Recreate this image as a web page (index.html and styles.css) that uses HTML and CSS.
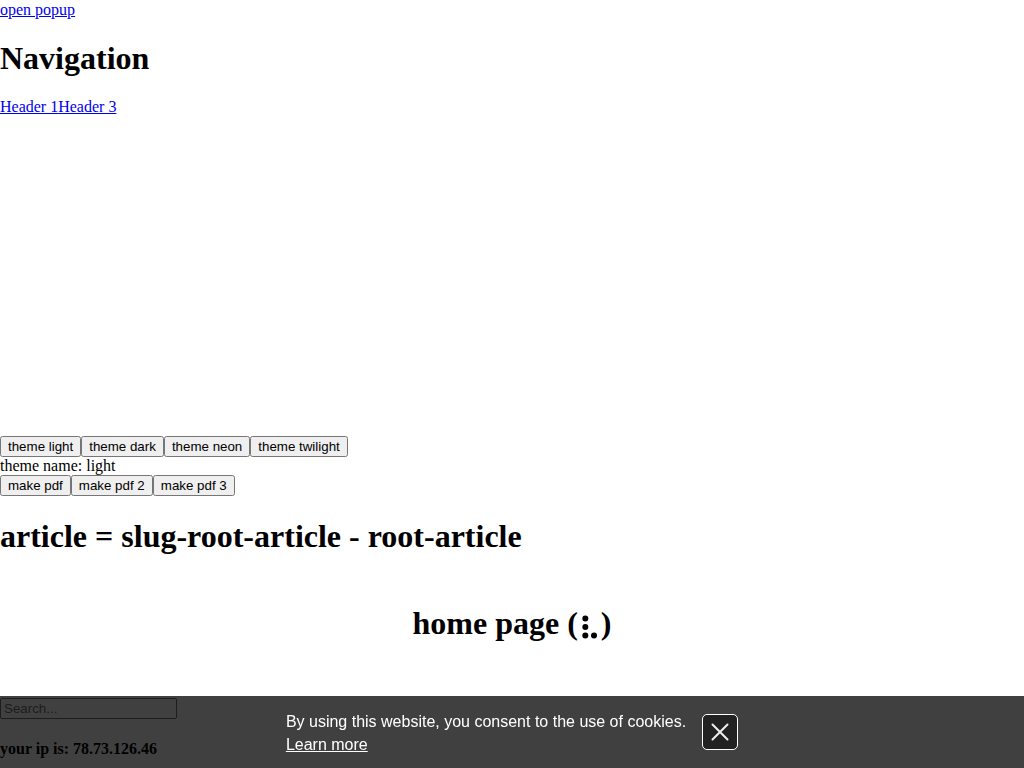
FILE: index.html
```html
<!DOCTYPE html>
<html lang="en">
<head>
<meta charset="utf-8">
<title>Home page</title>
<link rel="stylesheet" href="styles.css">
</head>
<body>
<div class="popup-link"><a href="#">open popup</a></div>
<h1>Navigation</h1>
<nav class="nav"><a href="#">Header 1</a><a href="#">Header 3</a></nav>
<div class="spacer"></div>
<div class="buttons"><button>theme light</button><button>theme dark</button><button>theme neon</button><button>theme twilight</button></div>
<div class="theme-name">theme name: light</div>
<div class="buttons"><button>make pdf</button><button>make pdf 2</button><button>make pdf 3</button></div>
<h1 class="article">article = slug-root-article - root-article</h1>
<h1 class="home">home page (<svg class="spinner" width="23" height="24" viewBox="0 0 23 24" role="img" aria-label="⣆"><circle cx="7.3" cy="3.5" r="3"/><circle cx="7.3" cy="12" r="3"/><circle cx="7.3" cy="20.5" r="3"/><circle cx="16" cy="20.5" r="3"/></svg>)</h1>
<div class="search"><input type="text" placeholder="Search..."></div>
<h4 class="ip">your ip is: 78.73.126.46</h4>
<div class="cookies">
<div class="cookies-text">By using this website, you consent to the use of cookies.<br><a href="#">Learn more</a></div>
<button class="close" aria-label="Close"><svg width="18" height="18" viewBox="0 0 18 18"><path d="M1.5 1.5L16.5 16.5M16.5 1.5L1.5 16.5" stroke="#eee" stroke-width="2" stroke-linecap="round"/></svg></button>
</div>
</body>
</html>
```
FILE: styles.css
```css
body { margin: 0; height: 768px; overflow: hidden; font: 16px/18px "Liberation Serif", serif; color: #000; background: #fff; }
h1 { margin: 21px 0; font-size: 32px; line-height: 37px; }
a { color: #0000ee; }
.popup-link { padding-top: 1px; }
.nav { display: flex; }
.spacer { height: 320px; }
.buttons { display: flex; }
.buttons button { font: 13.333px "Liberation Sans", sans-serif; }
.theme-name { height: 18px; line-height: 18px; }
.article { margin-top: 22px; }
.home { height: 37px; text-align: center; margin: 50px 0 56px; }
.spinner { vertical-align: -5px; }
.search { display: flex; }
.search input { box-sizing: border-box; width: 177px; height: 21px; font: 13.333px "Liberation Sans", sans-serif; }
.ip { margin: 21px 0; }
.cookies { position: fixed; left: 0; right: 0; bottom: 0; height: 72px; display: flex; align-items: center; justify-content: center; gap: 16px; background: rgba(0, 0, 0, .75); color: #fff; font: 16px/23px "Liberation Sans", sans-serif; }
.cookies-text { padding-top: 2px; }
.cookies a { color: #fff; }
.close { width: 36px; height: 36px; padding: 0; display: flex; align-items: center; justify-content: center; background: #222; border: 1px solid #fff; border-radius: 5px; }
```
